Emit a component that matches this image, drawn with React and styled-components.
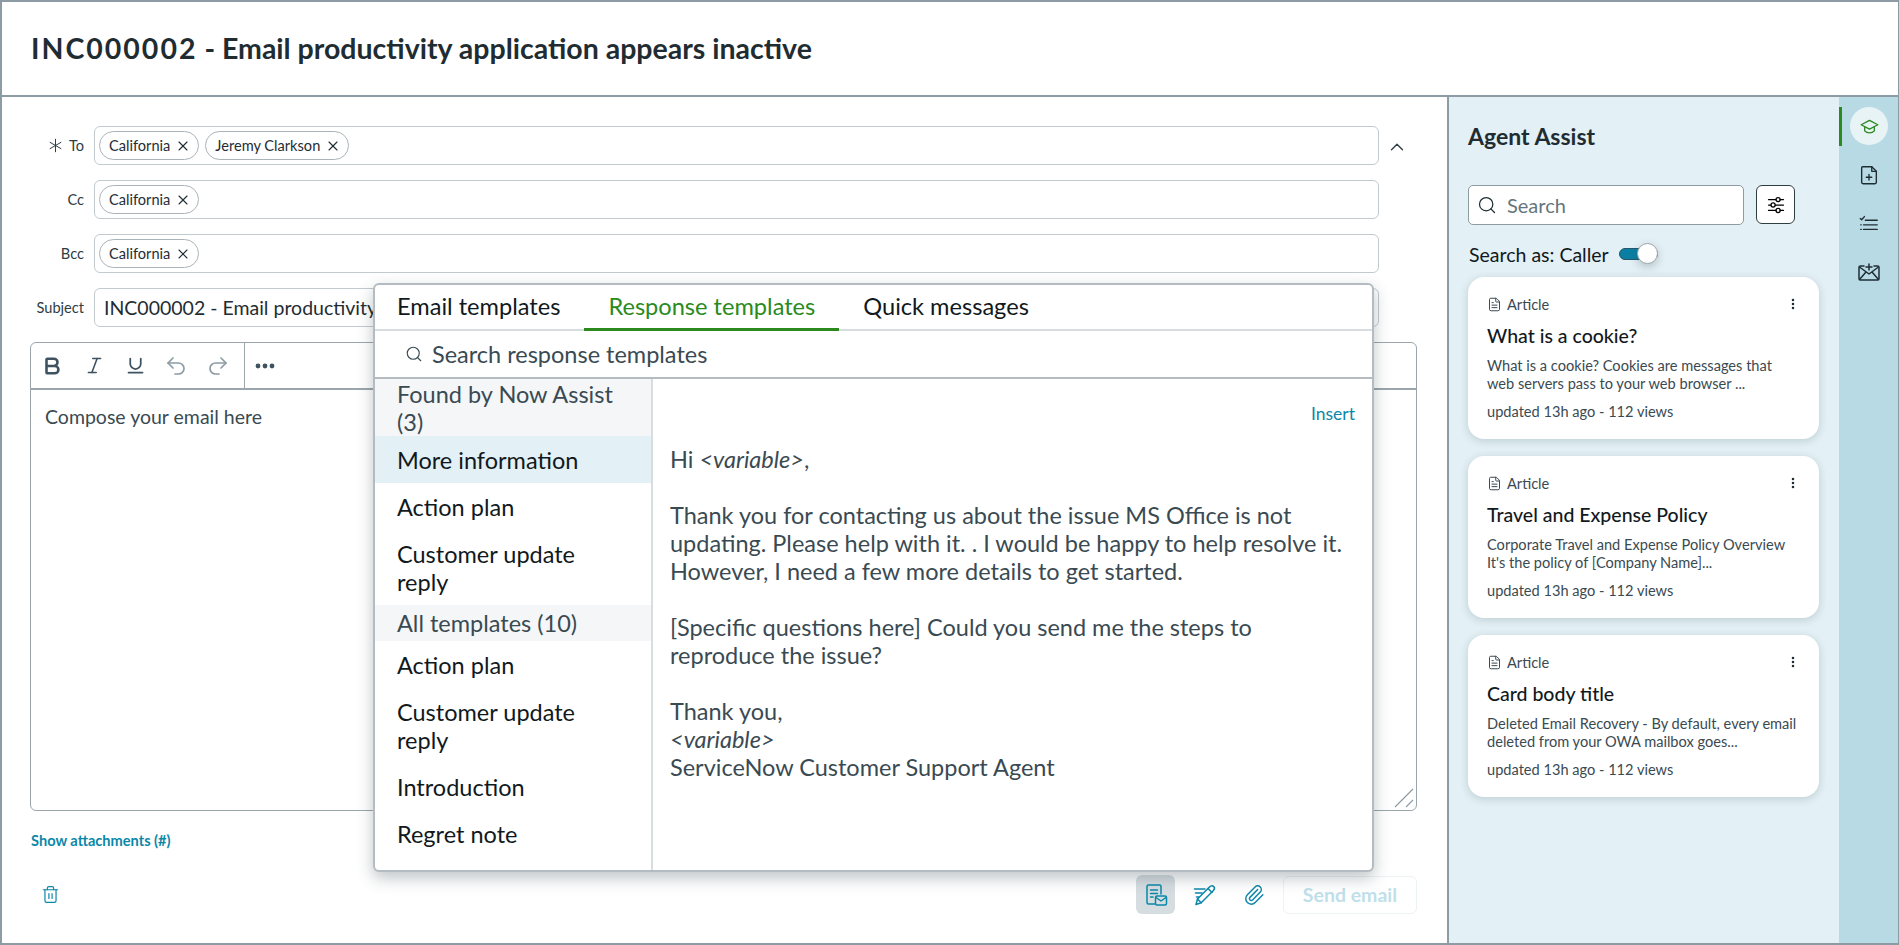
import styled, { createGlobalStyle } from "styled-components"
import {
  X, ChevronUp, Bold, Italic, Underline, Undo2, Redo2, Search, Trash2, Paperclip, EllipsisVertical, FileText,
} from "lucide-react"

const GlobalStyle = createGlobalStyle`
  * { box-sizing: border-box; }
  html, body { margin: 0; padding: 0; }
  body {
    font-family: Lato, "Open Sans", "Liberation Sans", sans-serif;
    background: #fff;
    color: #1f2d33;
    overflow: hidden;
  }
`

const Page = styled.div`
  width: 1899px;
  height: 945px;
  display: flex;
  flex-direction: column;
  border: 2px solid #8d9ca4;
  border-right-width: 1px;
`
const Header = styled.header`
  height: 95px;
  flex: none;
  display: flex;
  align-items: center;
  padding: 0 0 2px 29px;
  border-bottom: 2px solid #8d9ca4;
`
const Title = styled.h1`
  margin: 0;
  font-size: 28.500px;
  font-weight: 700;
  color: #1f2d33;
`
const TitleId = styled.span`
  letter-spacing: 2px;
`
const Body = styled.div`
  flex: 1;
  display: flex;
  min-height: 0;
`
const Left = styled.div`
  position: relative;
  width: 1447px;
  flex: none;
  padding: 29px 30px 0 28px;
  border-right: 2px solid #8d9ca4;
`
const FieldRow = styled.div`
  display: flex;
  align-items: center;
  height: 39px;
  margin-bottom: 15px;
`
const Label = styled.label`
  width: 55px;
  flex: none;
  margin-right: 9px;
  padding-right: 1px;
  display: flex;
  justify-content: flex-end;
  align-items: center;
  gap: 6px;
  font-size: 14.600px;
  color: #2f3d44;
`
const Field = styled.div`
  flex: 1;
  height: 39px;
  margin-right: 38px;
  display: flex;
  align-items: center;
  gap: 6px;
  padding: 0 4px;
  border: 1.5px solid #c3cace;
  border-radius: 6px;
  white-space: nowrap;
  overflow: hidden;
`
const SubjectText = styled.span`
  padding-left: 5px;
  font-size: 19.500px;
  color: #1f2d33;
`
const Chip = styled.span`
  height: 29px;
  display: inline-flex;
  align-items: center;
  gap: 5px;
  padding: 0 7px 0 9px;
  border: 1.5px solid #a9b3b8;
  border-radius: 15px;
  font-size: 14.600px;
  color: #1f2d33;
`
const Collapse = styled.button`
  position: absolute;
  top: 30px;
  left: 1379px;
  width: 32px;
  height: 39px;
  display: flex;
  align-items: center;
  justify-content: center;
  padding: 0;
  border: 0;
  background: none;
  color: #2f3d44;
`
const Editor = styled.div`
  position: relative;
  height: 469px;
  display: flex;
  flex-direction: column;
  border: 1.5px solid #9aa6ac;
  border-radius: 6px;
`
const Toolbar = styled.div`
  height: 47px;
  flex: none;
  display: flex;
  align-items: center;
  border-bottom: 2px solid #9aa6ac;
`
const ToolGroup = styled.div`
  height: 100%;
  display: flex;
  align-items: center;
  padding-right: 5px;
  border-right: ${(props) => (props.divided ? "1.5px solid #9aa6ac" : "none")};
`
const ToolButton = styled.button`
  width: ${(props) => (props.narrow ? "40px" : "42px")};
  height: 36px;
  display: flex;
  align-items: center;
  justify-content: center;
  padding: 0;
  border: 0;
  background: none;
  color: ${(props) => (props.muted ? "#8d9ca4" : "#3f5260")};
`
const Compose = styled.div`
  padding: 13px 14px;
  font-size: 19.500px;
  line-height: 28px;
  color: #3a4a52;
`
const Grip = styled.svg`
  position: absolute;
  right: 2px;
  bottom: 2px;
`
const AttachLink = styled.a`
  display: block;
  margin: 21px 0 0 1px;
  font-size: 14.600px;
  line-height: 18px;
  font-weight: 700;
  color: #0b87a8;
`
const Footer = styled.div`
  margin-top: 25px;
  display: flex;
  align-items: center;
  gap: 10px;
`
const Trash = styled.span`
  margin-left: 11px;
  margin-right: auto;
  display: flex;
  color: #0b87a8;
`
const IconButton = styled.button`
  width: 39px;
  height: 39px;
  display: flex;
  align-items: center;
  justify-content: center;
  padding: 0;
  border: 0;
  border-radius: 6px;
  color: #0b87a8;
  background: ${(props) => (props.active ? "#d6dde1" : "transparent")};
`
const SendButton = styled.button`
  width: 134px;
  height: 38px;
  font-family: inherit;
  font-size: 19.500px;
  font-weight: 700;
  color: #bfe0ea;
  background: #fff;
  border: 1.5px solid #edf2f4;
  border-radius: 6px;
`

const Popover = styled.div`
  position: absolute;
  left: 371px;
  top: 186px;
  width: 1001px;
  height: 589px;
  display: flex;
  flex-direction: column;
  background: #fff;
  border: 2px solid #b4bcc1;
  border-radius: 6px;
  box-shadow: 0 6px 16px rgba(40, 60, 70, 0.3);
  overflow: hidden;
`
const Tabs = styled.div`
  height: 46px;
  flex: none;
  display: flex;
  border-bottom: 2px solid #d8dde0;
`
const Tab = styled.div`
  height: 46px;
  padding: 0 24px 2px;
  display: flex;
  align-items: center;
  font-size: 23.600px;
  color: ${(props) => (props.active ? "#2a8a1e" : "#11191d")};
  border-bottom: 3px solid ${(props) => (props.active ? "#2a8a1e" : "transparent")};
  &:first-child {
    padding-left: 22px;
  }
`
const PopSearch = styled.div`
  height: 48px;
  flex: none;
  display: flex;
  align-items: center;
  gap: 9px;
  padding-left: 30px;
  border-bottom: 2px solid #b4bcc1;
  font-size: 23.500px;
  color: #3a4a52;
`
const PopBody = styled.div`
  flex: 1;
  display: flex;
  min-height: 0;
`
const List = styled.div`
  width: 278px;
  flex: none;
  border-right: 2px solid #d8dde0;
`
const GroupHead = styled.div`
  padding: ${(props) => (props.tall ? "1px 22px 0" : "4px 22px 4px")};
  background: #f4f6f7;
  font-size: 23.500px;
  line-height: 28px;
  color: #3a4a52;
`
const ListItem = styled.div`
  padding: 9.500px 22px;
  font-size: 23.500px;
  line-height: 28px;
  color: #11191d;
  background: ${(props) => (props.active ? "#e3f0f5" : "transparent")};
`
const Preview = styled.div`
  flex: 1;
  padding: 23px 17px 0;
  font-size: 23.500px;
  line-height: 28px;
  color: #3a4a52;
`
const InsertRow = styled.div`
  height: 39px;
  margin-bottom: 4px;
  display: flex;
  justify-content: flex-end;
  font-size: 17.500px;
  line-height: 24px;
  color: #0b87a8;
`
const Para = styled.p`
  margin: 0 0 28px;
`

const Assist = styled.aside`
  width: 390px;
  flex: none;
  padding: 0 20px 0 19px;
  background: #e3f0f5;
`
const AssistTitle = styled.h2`
  margin: 23px 0 33px;
  font-size: 23px;
  line-height: 32px;
  font-weight: 700;
  color: #1f2d33;
`
const SearchRow = styled.div`
  display: flex;
  gap: 12px;
`
const SearchBox = styled.div`
  width: 276px;
  height: 40px;
  display: flex;
  align-items: center;
  gap: 10px;
  padding-left: 8px;
  background: #fff;
  border: 1.5px solid #8d9ca4;
  border-radius: 5px;
  font-size: 20px;
  color: #65757d;
`
const FilterButton = styled.button`
  width: 39px;
  height: 39px;
  display: flex;
  align-items: center;
  justify-content: center;
  padding: 0;
  background: #fff;
  border: 1.5px solid #2f3d44;
  border-radius: 6px;
`
const SearchAs = styled.div`
  height: 24px;
  margin: 17px 0 11px 1px;
  display: flex;
  align-items: center;
  gap: 10px;
  font-size: 19.500px;
  color: #11191d;
`
const Toggle = styled.span`
  position: relative;
  width: 39px;
  height: 12px;
  background: #0b7fa3;
  border: 1px solid #24586a;
  border-radius: 6px;
`
const Knob = styled.span`
  position: absolute;
  right: -1px;
  top: -6px;
  width: 21px;
  height: 21px;
  background: #fff;
  border: 1px solid #9aa6ac;
  border-radius: 50%;
  box-shadow: 0 3px 8px rgba(40, 60, 70, 0.25);
`
const Card = styled.article`
  height: 162px;
  margin-bottom: 17px;
  padding: 17px 19px;
  background: #fff;
  border-radius: 16px;
  box-shadow: 0 2px 8px rgba(40, 70, 85, 0.2);
`
const CardTop = styled.div`
  height: 20px;
  display: flex;
  align-items: center;
  gap: 5px;
  font-size: 14.600px;
  color: #3a4a52;
`
const CardMenu = styled.span`
  margin-left: auto;
  display: flex;
  color: #1f2d33;
`
const CardTitle = styled.h3`
  margin: 10px 0 9px;
  font-size: 19.500px;
  line-height: 24px;
  font-weight: 500;
  color: #11191d;
`
const CardText = styled.p`
  margin: 0 0 10px;
  font-size: 14.600px;
  line-height: 18px;
  color: #3a4a52;
`
const CardMeta = styled.div`
  font-size: 14.600px;
  line-height: 18px;
  color: #3a4a52;
`
const Rail = styled.nav`
  position: relative;
  flex: 1;
  display: flex;
  flex-direction: column;
  align-items: center;
  gap: 10.500px;
  padding: 10px 0 0 1px;
  background: #b8dae5;
`
const RailMark = styled.span`
  position: absolute;
  left: 0;
  top: 10px;
  width: 3px;
  height: 39px;
  background: #2a8a1e;
`
const RailItem = styled.button`
  width: 38px;
  height: 38px;
  display: flex;
  align-items: center;
  justify-content: center;
  padding: 0;
  border: 0;
  border-radius: 50%;
  color: ${(props) => (props.active ? "#2a8a1e" : "#1f2d33")};
  background: ${(props) => (props.active ? "#e8f3f6" : "transparent")};
`

const Line = ({ size = 22, children, ...props }) => (
  <svg width={size} height={size} viewBox="0 0 24 24" fill="none" stroke="currentColor" strokeWidth="1.5" strokeLinecap="round" strokeLinejoin="round" {...props}>
    {children}
  </svg>
)

const AsteriskMark = () => (
  <Line size={15} strokeWidth="1.6">
    <path d="M12 2v20M3.300 7l17.400 10M3.300 17 20.700 7" />
  </Line>
)
const CapIcon = () => (
  <Line size={21}>
    <path d="M12 5 2.500 10 12 15l9.500-5z" />
    <path d="M6.500 12.500V17c1.500 1.600 3.500 2.300 5.500 2.300s4-.7 5.500-2.300v-4.500" />
  </Line>
)
const FileAddIcon = () => (
  <Line size={22}>
    <path d="M5 3h10l5 5v12a1.500 1.500 0 0 1-1.500 1.500h-13A1.500 1.500 0 0 1 4 20V4a1 1 0 0 1 1-1z" />
    <path d="M15 3v5h5M12 11.500v6M9 14.500h6" />
  </Line>
)
const ChecklistIcon = () => (
  <Line size={22}>
    <path d="M8 9h13M6 14h15M6 19h15" />
    <path d="m2.500 7 1.500 1.500L7 5" />
    <path d="M3 14h.5M3 19h.5" />
  </Line>
)
const MailAddIcon = () => (
  <Line size={24}>
    <path d="M7 6H3.500A1.500 1.500 0 0 0 2 7.500v11A1.500 1.500 0 0 0 3.500 20h17a1.500 1.500 0 0 0 1.500-1.500v-11A1.500 1.500 0 0 0 20.500 6H17" />
    <path d="m2.500 7 9.500 7 9.500-7M2.500 19.500 9 12M21.500 19.500 15 12" />
    <path d="M12 4v6M9 7h6" />
  </Line>
)
const TuneIcon = () => (
  <Line size={20}>
    <path d="M3 5.500h9M17 5.500h4M3 12h3M11 12h10M3 18.500h9M17 18.500h4" />
    <circle cx="14.500" cy="5.500" r="2.500" />
    <circle cx="8.500" cy="12" r="2.500" />
    <circle cx="14.500" cy="18.500" r="2.500" />
  </Line>
)
const TemplateMailIcon = () => (
  <Line size={24}>
    <path d="M11 21H4.500A1.500 1.500 0 0 1 3 19.500v-16A1.500 1.500 0 0 1 4.500 2h11A1.500 1.500 0 0 1 17 3.500V11" />
    <path d="M6.500 7h7M6.500 10.500h7M6.500 14H9" />
    <rect x="11.500" y="13" width="11" height="9" rx="1.500" />
    <path d="m12 14.500 5 3.500 5-3.500" />
  </Line>
)
const ComposePenIcon = () => (
  <Line size={24}>
    <path d="M3 21.500 4.500 16 16.500 4c1.500-1.500 3.200-1.500 4.200-.5s1 2.700-.5 4.200l-12 12z" />
    <path d="m4.500 16 3.700 3.700M15 5.500 19 9.500" />
    <path d="M1.500 6H12M2.500 10H9M3.500 14H6" />
  </Line>
)

const chipClose = <X size={16} strokeWidth={1.6} />

const cards = [
  { title: "What is a cookie?", text: ["What is a cookie? Cookies are messages that", "web servers pass to your web browser ..."] },
  { title: "Travel and Expense Policy", text: ["Corporate Travel and Expense Policy Overview", "It's the policy of [Company Name]..."] },
  { title: "Card body title", text: ["Deleted Email Recovery - By default, every email", "deleted from your OWA mailbox goes..."] },
]

const App = () => {
  return (
    <Page>
      <GlobalStyle />
      <Header>
        <Title><TitleId>INC000002</TitleId> - Email productivity application appears inactive</Title>
      </Header>
      <Body>
        <Left>
          <FieldRow>
            <Label><AsteriskMark />To</Label>
            <Field>
              <Chip>California {chipClose}</Chip>
              <Chip>Jeremy Clarkson {chipClose}</Chip>
            </Field>
          </FieldRow>
          <Collapse><ChevronUp size={22} strokeWidth={1.5} /></Collapse>
          <FieldRow>
            <Label>Cc</Label>
            <Field><Chip>California {chipClose}</Chip></Field>
          </FieldRow>
          <FieldRow>
            <Label>Bcc</Label>
            <Field><Chip>California {chipClose}</Chip></Field>
          </FieldRow>
          <FieldRow>
            <Label>Subject</Label>
            <Field><SubjectText>INC000002 - Email productivity</SubjectText></Field>
          </FieldRow>
          <Editor>
            <Toolbar>
              <ToolGroup divided>
                <ToolButton><Bold size={22} strokeWidth={2.8} /></ToolButton>
                <ToolButton><Italic size={21} strokeWidth={1.8} /></ToolButton>
                <ToolButton narrow><Underline size={21} strokeWidth={2} /></ToolButton>
                <ToolButton muted><Undo2 size={24} strokeWidth={1.7} /></ToolButton>
                <ToolButton muted><Redo2 size={24} strokeWidth={1.7} /></ToolButton>
              </ToolGroup>
              <ToolGroup>
                <ToolButton narrow>
                  <svg width="20" height="6" viewBox="0 0 20 6" fill="currentColor">
                    <circle cx="3" cy="3" r="2.400" /><circle cx="10" cy="3" r="2.400" /><circle cx="17" cy="3" r="2.400" />
                  </svg>
                </ToolButton>
              </ToolGroup>
            </Toolbar>
            <Compose>Compose your email here</Compose>
            <Grip width="20" height="20" viewBox="0 0 20 20" stroke="#8d9ca4" strokeWidth="1.2">
              <path d="M1 19 19 1M12 19l7-7" />
            </Grip>
          </Editor>
          <AttachLink>Show attachments (#)</AttachLink>
          <Footer>
            <Trash><Trash2 size={19} strokeWidth={1.5} /></Trash>
            <IconButton active><TemplateMailIcon /></IconButton>
            <IconButton><ComposePenIcon /></IconButton>
            <IconButton><Paperclip size={22} strokeWidth={1.6} /></IconButton>
            <SendButton>Send email</SendButton>
          </Footer>

          <Popover>
            <Tabs>
              <Tab>Email templates</Tab>
              <Tab active>Response templates</Tab>
              <Tab>Quick messages</Tab>
            </Tabs>
            <PopSearch><Search size={18} strokeWidth={1.5} />Search response templates</PopSearch>
            <PopBody>
              <List>
                <GroupHead tall>Found by Now Assist (3)</GroupHead>
                <ListItem active>More information</ListItem>
                <ListItem>Action plan</ListItem>
                <ListItem>Customer update reply</ListItem>
                <GroupHead>All templates (10)</GroupHead>
                <ListItem>Action plan</ListItem>
                <ListItem>Customer update reply</ListItem>
                <ListItem>Introduction</ListItem>
                <ListItem>Regret note</ListItem>
              </List>
              <Preview>
                <InsertRow>Insert</InsertRow>
                <Para>Hi <i>&lt;variable&gt;</i>,</Para>
                <Para>Thank you for contacting us about the issue MS Office is not updating. Please help with it. . I would be happy to help resolve it. However, I need a few more details to get started.</Para>
                <Para>[Specific questions here] Could you send me the steps to reproduce the issue?</Para>
                <Para>Thank you,<br /><i>&lt;variable&gt;</i><br />ServiceNow Customer Support Agent</Para>
              </Preview>
            </PopBody>
          </Popover>
        </Left>

        <Assist>
          <AssistTitle>Agent Assist</AssistTitle>
          <SearchRow>
            <SearchBox><Search size={20} strokeWidth={1.5} color="#1f2d33" />Search</SearchBox>
            <FilterButton><TuneIcon /></FilterButton>
          </SearchRow>
          <SearchAs>Search as: Caller <Toggle><Knob /></Toggle></SearchAs>
          {cards.map((card) => (
            <Card key={card.title}>
              <CardTop>
                <FileText size={15} strokeWidth={1.6} />
                Article
                <CardMenu><EllipsisVertical size={14} strokeWidth={2.4} /></CardMenu>
              </CardTop>
              <CardTitle>{card.title}</CardTitle>
              <CardText>{card.text[0]}<br />{card.text[1]}</CardText>
              <CardMeta>updated 13h ago - 112 views</CardMeta>
            </Card>
          ))}
        </Assist>

        <Rail>
          <RailMark />
          <RailItem active><CapIcon /></RailItem>
          <RailItem><FileAddIcon /></RailItem>
          <RailItem><ChecklistIcon /></RailItem>
          <RailItem><MailAddIcon /></RailItem>
        </Rail>
      </Body>
    </Page>
  )
}

export default App
